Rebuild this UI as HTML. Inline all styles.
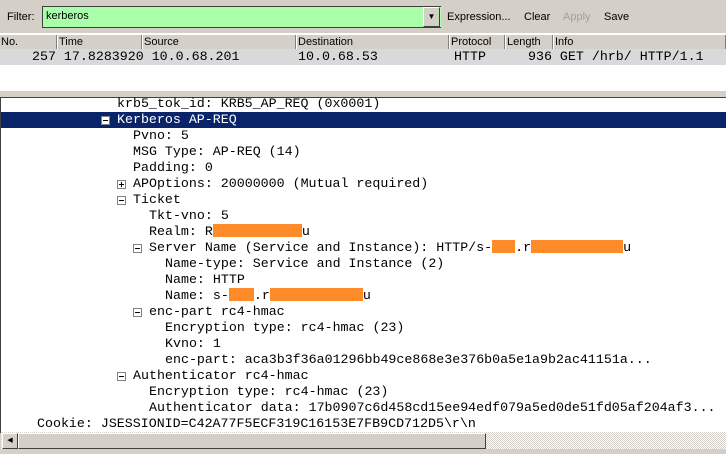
<!DOCTYPE html>
<html><head><meta charset="utf-8"><style>
*{margin:0;padding:0;box-sizing:border-box}
body{width:726px;height:454px;background:#d4d0c8;position:relative;overflow:hidden;font-family:"Liberation Sans",sans-serif;font-size:11px;color:#000}
.a{position:absolute;white-space:pre}
.m{font-family:"Liberation Mono",monospace;font-size:13.3px}
.r{display:inline-block;background:#ff8a2a;height:13px;vertical-align:-2px}
.bx{position:absolute;width:9px;height:9px;border:1px solid #808080;background:#fff}
.bx:before{content:"";position:absolute;left:1px;top:3px;width:5px;height:1px;background:#000}
.p:after{content:"";position:absolute;left:3px;top:1px;width:1px;height:5px;background:#000}
.hd{position:absolute;top:35px;height:14px;border-right:1px solid #808080;border-left:1px solid #fff;padding-left:1px;font-size:11px;line-height:14px}
</style></head><body>
<div class="a" style="left:7px;top:11px">Filter:</div>
<div class="a" style="left:42px;top:6px;width:399px;height:22px;background:#aaffaa;border:1px solid #404040;border-right:none;padding:3px 0 0 3px">kerberos</div>
<div class="a" style="left:423px;top:7px;width:17px;height:20px;background:#d4d0c8;border:1px solid #fff;border-right-color:#404040;border-bottom-color:#404040;font-size:8px;text-align:center;line-height:18px">▼</div>
<div class="a" style="left:447px;top:11px">Expression...</div>
<div class="a" style="left:524px;top:11px">Clear</div>
<div class="a" style="left:563px;top:11px;color:#a0a0a0">Apply</div>
<div class="a" style="left:604px;top:11px">Save</div>
<div class="a" style="left:0;top:33px;width:726px;height:2px;background:#fff"></div>
<div class="hd" style="left:-1px;width:58px">No.</div>
<div class="hd" style="left:57px;width:85px">Time</div>
<div class="hd" style="left:142px;width:154px">Source</div>
<div class="hd" style="left:296px;width:153px">Destination</div>
<div class="hd" style="left:449px;width:56px">Protocol</div>
<div class="hd" style="left:505px;width:48px">Length</div>
<div class="hd" style="left:553px;width:173px">Info</div>
<div class="a" style="left:0;top:49px;width:726px;height:16px;background:#d9d9d9"></div>
<div class="a m" style="left:32px;top:49px;line-height:16px">257 17.8283920 10.0.68.201</div>
<div class="a m" style="left:298px;top:49px;line-height:16px">10.0.68.53</div>
<div class="a m" style="left:454px;top:49px;line-height:16px">HTTP</div>
<div class="a m" style="left:528px;top:49px;line-height:16px">936 GET /hrb/ HTTP/1.1</div>
<div class="a" style="left:0;top:65px;width:726px;height:26px;background:#fff"></div>
<div class="a" style="left:0;top:97px;width:726px;height:336px;background:#fff;border-top:1px solid #404040;border-left:1px solid #404040"></div>
<div class="a" style="left:1px;top:112px;width:725px;height:16px;background:#0a246a"></div>
<div class="m" style="position:absolute;left:0;top:96px;line-height:16px;white-space:pre">
<div class="a" style="left:117px;top:0">krb5_tok_id: KRB5_AP_REQ (0x0001)</div>
<div class="a" style="left:117px;top:16px;color:#fff">Kerberos AP-REQ</div>
<div class="a" style="left:133px;top:32px">Pvno: 5</div>
<div class="a" style="left:133px;top:48px">MSG Type: AP-REQ (14)</div>
<div class="a" style="left:133px;top:64px">Padding: 0</div>
<div class="a" style="left:133px;top:80px">APOptions: 20000000 (Mutual required)</div>
<div class="a" style="left:133px;top:96px">Ticket</div>
<div class="a" style="left:149px;top:112px">Tkt-vno: 5</div>
<div class="a" style="left:149px;top:128px">Realm: R<span class="r" style="width:89px"></span>u</div>
<div class="a" style="left:149px;top:144px">Server Name (Service and Instance): HTTP/s-<span class="r" style="width:23px"></span>.r<span class="r" style="width:92px"></span>u</div>
<div class="a" style="left:165px;top:160px">Name-type: Service and Instance (2)</div>
<div class="a" style="left:165px;top:176px">Name: HTTP</div>
<div class="a" style="left:165px;top:192px">Name: s-<span class="r" style="width:25px"></span>.r<span class="r" style="width:93px"></span>u</div>
<div class="a" style="left:149px;top:208px">enc-part rc4-hmac</div>
<div class="a" style="left:165px;top:224px">Encryption type: rc4-hmac (23)</div>
<div class="a" style="left:165px;top:240px">Kvno: 1</div>
<div class="a" style="left:165px;top:256px">enc-part: aca3b3f36a01296bb49ce868e3e376b0a5e1a9b2ac41151a...</div>
<div class="a" style="left:133px;top:272px">Authenticator rc4-hmac</div>
<div class="a" style="left:149px;top:288px">Encryption type: rc4-hmac (23)</div>
<div class="a" style="left:149px;top:304px">Authenticator data: 17b0907c6d458cd15ee94edf079a5ed0de51fd05af204af3...</div>
<div class="a" style="left:37px;top:320px">Cookie: JSESSIONID=C42A77F5ECF319C16153E7FB9CD712D5\r\n</div>
</div>
<div class="bx" style="left:101px;top:116px;background:#fff;border-color:#808080"></div>
<div class="bx p" style="left:117px;top:180px"></div>
<div class="bx" style="left:117px;top:196px"></div>
<div class="bx" style="left:133px;top:244px"></div>
<div class="bx" style="left:133px;top:308px"></div>
<div class="bx" style="left:117px;top:372px"></div>
<div class="a" style="left:1px;top:432px;width:725px;height:17px;background:repeating-conic-gradient(#d4d0c8 0 25%,#fff 0 50%) 0 0/2px 2px"></div>
<div class="a" style="left:2px;top:433px;width:16px;height:16px;background:#d4d0c8;border:1px solid #fff;border-right-color:#404040;border-bottom-color:#404040;font-size:7px;line-height:14px;text-align:center">◀</div>
<div class="a" style="left:18px;top:433px;width:468px;height:16px;background:#d4d0c8;border:1px solid #fff;border-right-color:#404040;border-bottom-color:#404040"></div>
</body></html>
